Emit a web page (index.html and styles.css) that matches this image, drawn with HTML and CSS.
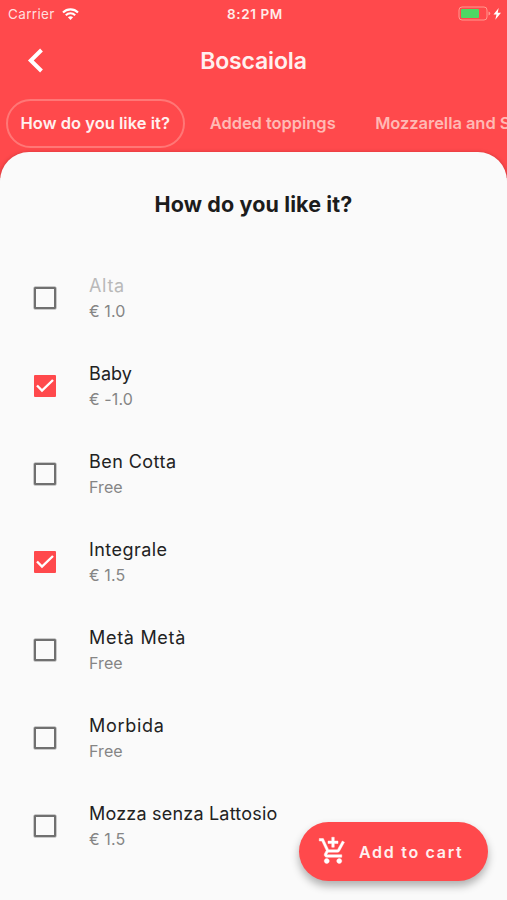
FILE: index.html
```html
<!DOCTYPE html>
<html lang="en">
<head>
<meta charset="utf-8">
<meta name="viewport" content="width=device-width">
<title>Boscaiola</title>
<link rel="stylesheet" href="styles.css">
</head>
<body>
<div class="app">
  <header class="header">
    <div class="status">
      <div class="status-left">
        <span class="carrier">Carrier</span>
        <svg class="wifi" viewBox="0 0 17 12" width="17" height="12" fill="none" stroke="#fff" stroke-width="2.1"><path d="M1 4.5C5.2.3 11.8.3 16 4.5M3.8 7.2c2.7-2.6 6.7-2.6 9.4 0"/><path d="M8.5 11.9 5.9 9.3c1.4-1.4 3.8-1.4 5.2 0z" fill="#fff" stroke="none"/></svg>
      </div>
      <span class="clock">8:21 PM</span>
      <div class="status-right">
        <svg viewBox="0 0 44 16" width="44" height="16"><rect x="1" y="1" width="28" height="13" rx="3" fill="none" stroke="#ff9a8f" stroke-width="1"/><rect x="3" y="3" width="18" height="9" rx="1" fill="#4cd964"/><path d="M30.500 5.500v4q1.800-.6 1.800-2t-1.800-2z" fill="#ff9a8f"/><path d="M40.700 2 35.500 8.500h3l-1.200 5.200L43 6.700h-3.300z" fill="#fff"/></svg>
      </div>
    </div>
    <div class="navbar">
      <svg class="back" viewBox="0 0 18 26" width="18" height="26" fill="none" stroke="#fff" stroke-width="4"><path d="M14.500 2 3.800 12.500l10.700 10.500"/></svg>
      <h1 class="title">Boscaiola</h1>
    </div>
    <nav class="tabs">
      <a class="tab active">How do you like it?</a>
      <a class="tab">Added toppings</a>
      <a class="tab">Mozzarella and S</a>
    </nav>
  </header>
  <main class="sheet">
    <h2 class="heading">How do you like it?</h2>
    <ul class="options">
      <li class="option disabled"><span class="box"></span><div class="label"><span class="name wide">Alta</span><span class="price">€ 1.0</span></div></li>
      <li class="option"><span class="box checked"><svg viewBox="0 0 22 22" width="22" height="22"><path d="m3 10.500 5 5L19 5"/></svg></span><div class="label"><span class="name tight">Baby</span><span class="price">€ -1.0</span></div></li>
      <li class="option"><span class="box"></span><div class="label"><span class="name">Ben Cotta</span><span class="price">Free</span></div></li>
      <li class="option"><span class="box checked"><svg viewBox="0 0 22 22" width="22" height="22"><path d="m3 10.500 5 5L19 5"/></svg></span><div class="label"><span class="name">Integrale</span><span class="price">€ 1.5</span></div></li>
      <li class="option"><span class="box"></span><div class="label"><span class="name wide">Metà Metà</span><span class="price">Free</span></div></li>
      <li class="option"><span class="box"></span><div class="label"><span class="name wide">Morbida</span><span class="price">Free</span></div></li>
      <li class="option"><span class="box"></span><div class="label"><span class="name long">Mozza senza Lattosio</span><span class="price">€ 1.5</span></div></li>
    </ul>
  </main>
  <button class="fab">
    <svg viewBox="0 0 24 24" width="30" height="30" fill="#fff" stroke="#fff" stroke-width=".35"><path d="M11 9h2V6h3V4h-3V1h-2v3H8v2h3v3zm-4 9c-1.100 0-1.990.9-1.990 2S5.900 22 7 22s2-.9 2-2-.9-2-2-2zm10 0c-1.100 0-1.990.9-1.990 2s.89 2 1.990 2 2-.9 2-2-.9-2-2-2zm-9.830-3.250.03-.12.9-1.630h7.450c.75 0 1.410-.41 1.750-1.030l3.860-7.010L19.420 4h-.01l-1.100 2-2.760 5H8.530l-.13-.27L6.160 6l-.95-2-.94-2H1v2h2l3.600 7.590-1.350 2.450c-.16.28-.25.61-.25.96 0 1.100.9 2 2 2h12v-2H7.420c-.13 0-.25-.11-.25-.25z"/></svg>
    <span class="fab-text">Add to cart</span>
  </button>
</div>
</body>
</html>
```
FILE: styles.css
```css
* { box-sizing: border-box; }
body { margin: 0; background: #fafafa; font-family: Inter, "Liberation Sans", sans-serif; }
.app { position: relative; width: 507px; height: 900px; overflow: hidden; }
.header { height: 178px; background: #ff494c; color: #fff; }
.status { display: grid; grid-template-columns: 1fr auto 1fr; align-items: center; height: 28px; padding: 0 5px 0 8px; }
.status-left { display: flex; align-items: center; gap: 7px; padding-bottom: 1px; color: #ffdfdf; }
.carrier { font-size: 13.5px; letter-spacing: .35px; }
.wifi { display: block; }
.clock { font-size: 13.5px; font-weight: 600; letter-spacing: .6px; color: #ffebe9; }
.status-right { display: flex; justify-content: flex-end; }
.status-right svg { display: block; }
.navbar { display: grid; grid-template-columns: 60px 1fr 60px; align-items: center; height: 65px; }
.back { margin-left: 27px; }
.title { margin: 0; text-align: center; font-size: 23px; font-weight: 600; line-height: 30px; letter-spacing: -.15px; color: #fff0ef; }
.tabs { display: flex; margin-left: 6px; padding-top: 6px; overflow: hidden; white-space: nowrap; }
.tab { flex: none; height: 48px; line-height: 48px; font-size: 16.5px; font-weight: 600; color: #ffb9b4; }
.tab + .tab { padding: 0 15px 0 24.5px; letter-spacing: -.05px; }
.tab.active { height: 49px; padding: 0 13.3px 0 12.5px; border: 2px solid #ff7776; border-radius: 25px; line-height: 45px; letter-spacing: .02px; color: #fff0ef; }
.sheet { position: relative; height: 748px; margin-top: -26px; background: #fafafa; border-radius: 29px 29px 0 0; box-shadow: 0 1px 4px rgba(80, 0, 0, .4); clip-path: inset(-4px 0 0 0); }
.heading { margin: 0; padding-top: 37px; text-align: center; font-size: 21.5px; line-height: 30px; font-weight: 700; letter-spacing: .12px; color: #1c1c1c; }
.options { margin: 0; padding: 35px 0 0; list-style: none; }
.option { display: flex; align-items: center; height: 88px; padding-left: 34px; }
.box { width: 22px; height: 22px; border: 2px solid #707070; border-radius: 1px; box-shadow: 0 0 0 .5px #999; }
.box.checked { border: 0; background: #ff494c; box-shadow: none; }
.box svg { display: block; fill: none; stroke: #fff; stroke-width: 2.4; }
.label { display: flex; flex-direction: column; margin-left: 33px; padding-top: 1px; }
.name { font-size: 18px; line-height: 26px; letter-spacing: .45px; color: #222; }
.name.wide { letter-spacing: .7px; }
.name.tight { letter-spacing: .1px; }
.name.long { letter-spacing: .2px; }
.price { font-size: 16px; line-height: 25px; letter-spacing: .1px; color: #858585; }
.disabled .name { color: #b9b9b9; }
.fab { position: absolute; left: 299px; top: 822px; display: flex; align-items: center; width: 189px; height: 59px; padding: 0 0 0 19px; border: 0; border-radius: 30px; background: #ff494c; box-shadow: 0 5px 8px rgba(0, 0, 0, .3); color: #fff0ef; font-family: inherit; font-size: 16px; font-weight: 600; letter-spacing: 1.7px; white-space: nowrap; }
.fab svg { margin-bottom: 2px; }
.fab-text { margin-left: 11px; }
```
